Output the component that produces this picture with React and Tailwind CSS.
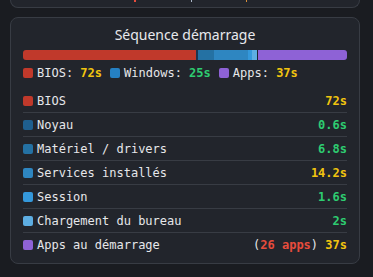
const segments = [
  { key: 'bios', label: 'BIOS', secs: 72, color: '#c0392b', value: '72s', tone: 'text-[#f1c40f]' },
  { key: 'noyau', label: 'Noyau', secs: 0.6, color: '#1f5f8f', value: '0.6s', tone: 'text-[#2ecc71]' },
  { key: 'materiel', label: 'Matériel / drivers', secs: 6.8, color: '#2471a3', value: '6.8s', tone: 'text-[#2ecc71]' },
  { key: 'services', label: 'Services installés', secs: 14.2, color: '#2e86c1', value: '14.2s', tone: 'text-[#f1c40f]' },
  { key: 'session', label: 'Session', secs: 1.6, color: '#3498db', value: '1.6s', tone: 'text-[#2ecc71]' },
  { key: 'bureau', label: 'Chargement du bureau', secs: 2, color: '#5dade2', value: '2s', tone: 'text-[#2ecc71]' },
  { key: 'apps', label: 'Apps au démarrage', secs: 37, color: '#8e62d6', value: '37s', tone: 'text-[#f1c40f]' },
];

const total = segments.reduce((sum, s) => sum + s.secs, 0);

const mono = { fontFamily: '"DejaVu Sans Mono", "Liberation Mono", monospace' };

function Legend({ color, label, value, tone }) {
  return (
    <div className="flex items-center gap-[4px]">
      <span className="shrink-0 w-[10px] h-[10px] rounded-[2px]" style={{ backgroundColor: color }} />
      <span className="text-[#e6e7ea]">
        {label}: <span className={`font-bold ${tone}`}>{value}</span>
      </span>
    </div>
  );
}

export default function App() {
  return (
    <div className="min-h-screen bg-[#1a1c21] font-['Noto_Sans',sans-serif]">
      {/* bottom edge of the previous card */}
      <div className="ml-[10px] w-[350px] h-[8px] bg-[#22252c] border-x border-b border-[#383c44] rounded-b-lg flex items-start">
        <span className="ml-[123px] w-[2px] h-[2px] bg-[#e74c3c]" />
        <span className="ml-[55px] w-[1px] h-[2px] bg-[#aab7c8]" />
        <span className="ml-[54px] w-[1px] h-[2px] bg-[#d9903a]" />
      </div>

      <div className="mt-[9px] ml-[10px] w-[350px] bg-[#22252c] border border-[#383c44] rounded-lg px-[12px] pt-[7px] pb-[6px]">
        <div className="h-[20px] leading-[20px] text-center text-[14px] text-[#e8e9ec]">
          Séquence démarrage
        </div>

        <div className="mt-[5px] h-[10px] flex rounded-[3px] overflow-hidden bg-[#1b2430]">
          {segments.map((s) => (
            <div
              key={s.key}
              className="h-full"
              style={{
                width: `${(s.secs / total) * 100}%`,
                backgroundColor: s.key === 'noyau' ? '#1c3550' : s.color,
                marginLeft: s.key === 'apps' ? '1px' : 0,
              }}
            />
          ))}
        </div>

        <div className="mt-[5px] h-[16px] flex items-center gap-[8px] text-[12px]" style={mono}>
          <Legend color="#c0392b" label="BIOS" value="72s" tone="text-[#f1c40f]" />
          <Legend color="#2580c3" label="Windows" value="25s" tone="text-[#2ecc71]" />
          <Legend color="#8e62d6" label="Apps" value="37s" tone="text-[#f1c40f]" />
        </div>

        <div className="mt-[8px] text-[12px]" style={mono}>
          {segments.map((s, i) => (
            <div
              key={s.key}
              className={`h-[24px] flex items-center justify-between ${i < segments.length - 1 ? 'border-b border-[#383c44]' : ''}`}
            >
              <div className="flex items-center gap-[4px]">
                <span className="shrink-0 w-[10px] h-[10px] rounded-[2px]" style={{ backgroundColor: s.color }} />
                <span className="text-[#e6e7ea]">{s.label}</span>
              </div>
              {s.key === 'apps' ? (
                <span className="font-bold">
                  <span className="text-[#e6e7ea] font-normal">(</span>
                  <span className="text-[#e74c3c]">26 apps</span>
                  <span className="text-[#e6e7ea] font-normal">)</span>{' '}
                  <span className={s.tone}>{s.value}</span>
                </span>
              ) : (
                <span className={`font-bold ${s.tone}`}>{s.value}</span>
              )}
            </div>
          ))}
        </div>
      </div>
    </div>
  );
}
